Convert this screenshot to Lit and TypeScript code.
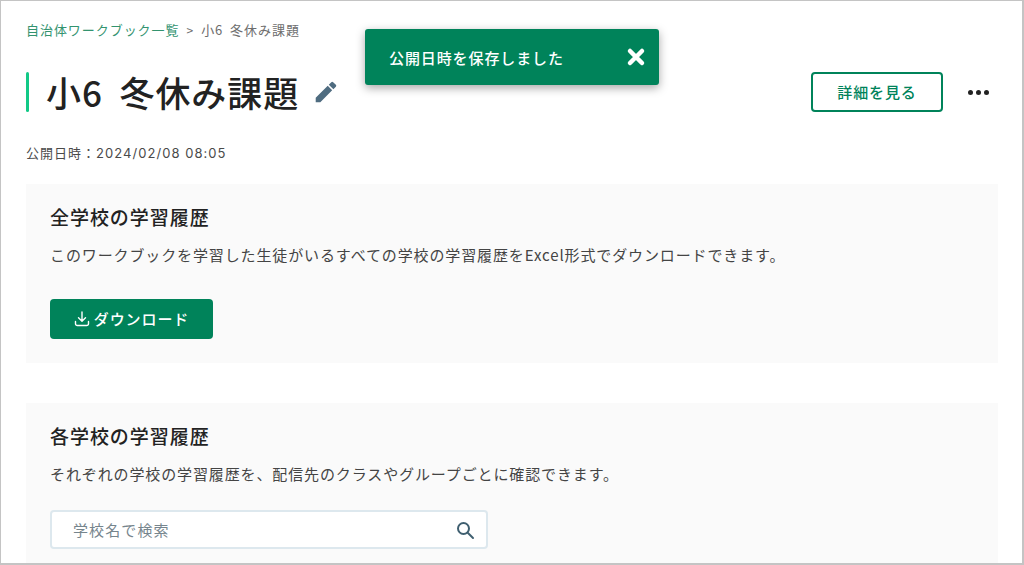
import { LitElement, html, css } from "lit";
import { customElement } from "lit/decorators.js";

@customElement("app-root")
export class AppRoot extends LitElement {
  static styles = css`
    :host {
      display: block;
      width: 1024px;
      height: 565px;
      overflow: hidden;
      background: #fff;
      font-family: "Noto Sans CJK JP", "Noto Sans", sans-serif;
      color: #333;
    }
    .frame {
      position: relative;
      box-sizing: border-box;
      width: 1024px;
      height: 565px;
      overflow: hidden;
      border: 1px solid #c4c4c4;
      border-bottom-width: 2px;
      border-right-width: 2px;
      padding: 17px 25px 0 25px;
      background: #fff;
    }
    .crumbs {
      display: flex;
      align-items: center;
      height: 22px;
      font-size: 13px;
      letter-spacing: 0.95px;
      word-spacing: 3px;
      color: #6d6d6d;
      gap: 6px;
      white-space: nowrap;
    }
    .crumbs .link { color: #33936f; }
    .crumbs .sep { font-size: 12px; margin: 0 2px 0 1px; letter-spacing: 0; }
    .head {
      display: flex;
      align-items: center;
      margin-top: 32px;
      height: 40px;
    }
    .bar {
      width: 3px;
      height: 40px;
      border-radius: 2px;
      background: #12c987;
      flex: none;
    }
    h1 {
      margin: 0 0 0 17px;
      font-size: 35px;
      line-height: 40px;
      font-weight: 500;
      letter-spacing: 0.9px;
      word-spacing: 8px;
      color: #222;
      white-space: nowrap;
    }
    .pencil { width: 26px; height: 26px; margin-left: 14px; flex: none; }
    .spacer { flex: 1; }
    .detail {
      box-sizing: border-box;
      width: 132px;
      height: 40px;
      border: 2px solid #00835a;
      border-radius: 4px;
      background: #fff;
      color: #00835a;
      font: 500 15px "Noto Sans CJK JP", sans-serif;
      letter-spacing: 0.9px;
      padding: 0 0 2px;
    }
    .more {
      display: flex;
      gap: 3px;
      margin: 0 8px 0 25px;
    }
    .more i { width: 5px; height: 5px; border-radius: 50%; background: #222; display: block; }
    .meta {
      margin-top: 31px;
      font-size: 13px;
      line-height: 20px;
      letter-spacing: 1px;
      color: #4a4a4a;
      white-space: nowrap;
    }
    .meta .num { font-family: "Inter", sans-serif; letter-spacing: 1.05px; }
    .card {
      background: #fafafa;
      width: 972px;
      box-sizing: border-box;
      padding: 20px 24px 24px;
    }
    .first { margin-top: 21px; height: 179px; }
    .second { margin-top: 40px; height: 200px; }
    h2 {
      margin: 0;
      font-size: 19px;
      line-height: 26px;
      font-weight: 500;
      letter-spacing: 0.95px;
      color: #222;
    }
    p {
      margin: 14px 0 0;
      font-size: 15px;
      line-height: 22px;
      color: #444;
      letter-spacing: 0.88px;
      white-space: nowrap;
    }
    .dl {
      display: flex;
      align-items: center;
      justify-content: center;
      gap: 3px;
      margin-top: 33px;
      box-sizing: border-box;
      width: 163px;
      height: 40px;
      border: 0;
      border-radius: 4px;
      padding: 0 1px 2px 0;
      background: #00835a;
      color: #fff;
      font: 500 15px "Noto Sans CJK JP", sans-serif;
      letter-spacing: 0.9px;
    }
    .dl svg { width: 18px; height: 18px; margin-top: 2px; }
    .search {
      display: flex;
      align-items: center;
      justify-content: space-between;
      box-sizing: border-box;
      width: 438px;
      height: 39px;
      margin-top: 25px;
      padding: 0 11px 0 21px;
      background: #fff;
      border: 2px solid #dde8ee;
      border-radius: 4px;
      font-size: 15px;
      letter-spacing: 1.1px;
      color: #76858d;
    }
    .search svg { width: 20px; height: 20px; }
    .toast {
      position: absolute;
      left: 364px;
      top: 28px;
      box-sizing: border-box;
      width: 294px;
      height: 56px;
      display: flex;
      align-items: center;
      justify-content: space-between;
      padding: 0 13px 0 24px;
      background: #00835a;
      border-radius: 3px;
      box-shadow: 0 3px 10px rgba(0, 0, 0, 0.35);
      color: #fff;
      font-size: 15px;
      font-weight: 500;
      letter-spacing: 0.9px;
    }
    .toast svg { width: 20px; height: 20px; }
  `;

  render() {
    return html`
      <div class="frame">
        <nav class="crumbs">
          <span class="link">自治体ワークブック一覧</span>
          <span class="sep">&gt;</span>
          <span>小6 冬休み課題</span>
        </nav>
        <div class="head">
          <div class="bar"></div>
          <h1>小6 冬休み課題</h1>
          <svg class="pencil" viewBox="0 0 24 24" fill="#4f6c80">
            <path d="M2.500 17.250V21.500h4.250L17.700 10.400l-4.100-4.100L2.500 17.250zM21.100 7.100a1.200 1.200 0 0 0 0-1.700l-2.500-2.500a1.200 1.200 0 0 0-1.700 0l-2.300 2.300 4.200 4.200 2.300-2.300z" />
          </svg>
          <div class="spacer"></div>
          <button class="detail">詳細を見る</button>
          <div class="more"><i></i><i></i><i></i></div>
        </div>
        <div class="meta">公開日時：<span class="num">2024/02/08 08:05</span></div>
        <section class="card first">
          <h2>全学校の学習履歴</h2>
          <p>このワークブックを学習した生徒がいるすべての学校の学習履歴をExcel形式でダウンロードできます。</p>
          <button class="dl">
            <svg viewBox="0 0 18 18" fill="none" stroke="#fff" stroke-width="1.4" stroke-linecap="round" stroke-linejoin="round">
              <path d="M9 2v9M5.500 7.800 9 11.200l3.500-3.400M2.500 11.500v2.200A1.800 1.800 0 0 0 4.300 15.500h9.400a1.800 1.800 0 0 0 1.800-1.800v-2.200" />
            </svg>
            ダウンロード
          </button>
        </section>
        <section class="card second">
          <h2>各学校の学習履歴</h2>
          <p>それぞれの学校の学習履歴を、配信先のクラスやグループごとに確認できます。</p>
          <div class="search">
            <span>学校名で検索</span>
            <svg viewBox="0 0 20 20" fill="none" stroke="#3f5f70" stroke-width="2" stroke-linecap="round">
              <circle cx="8.500" cy="8.500" r="5.500" />
              <path d="m13 13 5 5" />
            </svg>
          </div>
        </section>
        <div class="toast">
          <span>公開日時を保存しました</span>
          <svg viewBox="0 0 20 20" fill="none" stroke="#fff" stroke-width="4.500" stroke-linecap="round">
            <path d="M4 4l12 12M16 4 4 16" />
          </svg>
        </div>
      </div>
    `;
  }
}
